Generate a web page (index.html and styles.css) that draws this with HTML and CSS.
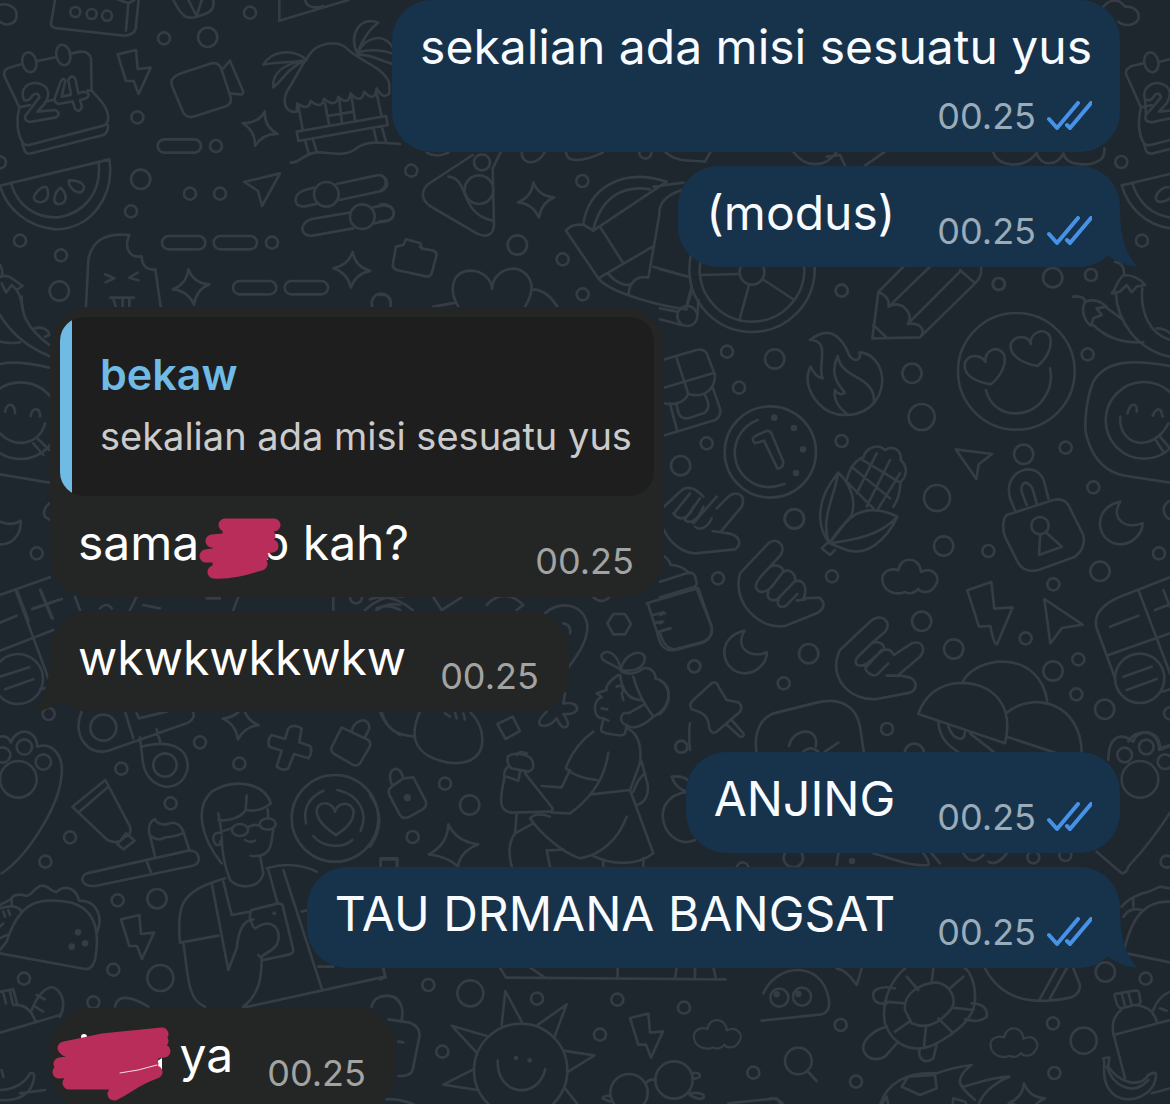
FILE: index.html
```html
<!DOCTYPE html>
<html lang="id">
<head>
	<meta charset="UTF-8">
	<meta name="viewport" content="width=device-width, initial-scale=1.0">
	<title>Chat</title>
	<link rel="stylesheet" href="styles.css">
</head>
<body>
	<svg class="wallpaper" viewBox="0 0 1170 1104" preserveAspectRatio="xMinYMin slice" aria-hidden="true">
		<defs>
			<circle id="dot" r="18"/>
			<circle id="ring" r="29"/>
			<circle id="bigring" r="39"/>
			<path id="star" d="M-8-52Q8-10 55-7Q15 10 9 54Q-10 12-54 8Q-12-10-8-52Z"/>
			<path id="bolt" d="M-47-52L8-65L13-8L52-12L16 67L1 28L-22 28Z"/>
			<path id="moon" d="M-4-65C-95-45-75 60-5 63C35 62 62 30 63 0C10 20-35-15-4-65Z"/>
			<path id="cloud" d="M-30-27C-25-70 35-70 38-22C75-40 100-5 80 20C65 45 35 40 30 28C20 42 0 45-10 38C-40 50-80 35-78-5C-75-25-50-35-30-27Z"/>
			<path id="pill" d="M-45-20H45A20 20 0 0 1 45 20H-45A20 20 0 0 1-45-20Z"/>
		</defs>

		<!-- top left: calendar, melon, beach hut, ice cream -->
		<g transform="scale(.33333)">
			<path d="M-10 20C10 5 50 15 50 45C50 75 15 80 0 65M165 0L153 70Q153 82 165 84L370 107Q410 105 408 75L416 0M385 10L378 92M350-3L385 10L403 0"/>
			<circle cx="226" cy="36" r="15"/><circle cx="275" cy="42" r="15"/><circle cx="321" cy="47" r="15"/>
			<path d="M520 0C545 50 560 60 590 50C630 40 645 30 640 0M565 0L590 48L605 0M838 0V62L1045 0M915 0C920 25 950 25 970 18"/>
			<use href="#dot" x="750" y="38"/><use href="#dot" x="492" y="115"/><use href="#ring" x="623" y="112"/>
			<!-- calendar -->
			<path d="M66 192L25 204Q8 212 14 230L58 322L90 315M262 272H275L273 175Q265 152 240 155L208 162M112 183L170 171M135 306L165 298M58 322C50 350 48 400 70 430Q75 438 90 434L310 377Q328 370 324 345C318 315 300 300 275 272M66 430L75 455Q82 464 95 460L310 405Q325 398 324 375"/>
			<ellipse cx="88" cy="187" rx="21" ry="30" transform="rotate(-12 88 187)"/><ellipse cx="190" cy="165" rx="21" ry="31" transform="rotate(-12 190 165)"/>
			<path d="M72 300C58 265 85 245 115 250C150 260 150 285 135 310L112 335L165 330Q185 340 168 352L90 366Q68 360 78 345L118 292C115 275 100 280 94 292Q85 305 72 300ZM182 245Q190 230 196 242L185 290L213 284L205 240Q215 220 226 236L235 280Q255 270 265 282Q270 295 240 300L246 320Q240 340 226 328L218 304L175 312Q160 305 165 292Z"/>
			<use href="#bolt" x="400" y="215"/><use href="#dot" x="412" y="352"/>
			<path d="M535 223L635 190Q655 186 663 204L692 292Q696 310 680 318L580 350Q560 355 550 338L515 255Q510 235 535 223ZM667 208L690 182L730 275Q728 285 718 283L691 280"/>
			<use href="#star" transform="translate(780 385) rotate(25)"/>
			<use href="#pill" x="538" y="438"/><use href="#dot" x="648" y="438"/>
			<!-- beach hut -->
			<path d="M890 335C850 340 850 300 860 275C885 240 910 180 940 150C970 125 1020 125 1040 145C1080 185 1150 200 1168 250V280Q1150 300 1130 265Q1125 310 1092 275Q1085 315 1052 280Q1045 320 1015 290Q1008 325 972 296Q965 330 932 303Q925 335 892 310ZM895 318L908 388M975 310L988 378M1018 300L1026 370M1055 290L1065 362M1130 280L1145 350M983 348L1060 335M890 395L1158 348L1163 375L895 423ZM915 420L926 460M938 415L950 455M1120 383L1130 425M1145 380L1158 425M872 488C900 490 915 455 960 457C1000 460 1040 470 1070 445C1100 420 1150 428 1200 432"/>
			<path d="M920 180C880 145 815 150 790 194C820 185 870 190 918 180C860 190 815 215 820 262C850 240 860 205 918 180M1072 158C1045 115 1075 45 1135 68C1110 85 1090 115 1072 158C1100 110 1150 95 1180 145M1072 158C1110 145 1160 150 1200 170M1072 165C1120 160 1160 195 1200 195"/>
			<!-- melon slice -->
			<path d="M-20 562L328 478C345 590 270 690 165 688C80 680 20 625 0 558M34 553C55 620 110 655 175 652C250 640 305 580 296 490M140 562C125 555 90 590 106 602C125 615 155 600 140 562ZM182 563C165 575 155 605 172 612C200 615 205 585 182 563ZM206 541C205 560 225 580 243 577C265 560 245 540 206 541Z"/>
			<use href="#dot" x="0" y="487"/><use href="#ring" x="422" y="538"/><use href="#dot" x="393" y="634"/><use href="#dot" x="570" y="581"/><use href="#dot" x="660" y="581"/>
			<path d="M733 546L840 520L786 618L774 573ZM942 563L915 570C880 580 875 620 912 620L955 610M1010 552L1130 526C1160 522 1175 560 1145 573L1018 600M1048 638L935 657C895 670 900 710 938 707L1060 685M1118 622L1150 616C1185 615 1195 655 1160 662L1123 670"/>
			<circle cx="979" cy="583" r="37"/><circle cx="1087" cy="650" r="37"/>
			<use href="#dot" x="60" y="722"/><use href="#dot" x="183" y="766"/><use href="#ring" x="178" y="873"/>
			<use href="#pill" x="551" y="728"/><use href="#pill" x="706" y="728"/><use href="#dot" x="816" y="728"/>
			<path d="M258 920L265 780C275 725 310 698 388 705C370 745 390 775 425 769C425 800 445 812 466 808L482 920M315 823L343 835L317 847M413 818L388 833L415 841M331 893H402M340 895L347 920M368 896V920M388 896V920"/>
			<use href="#star" x="573" y="860"/><use href="#star" transform="translate(1055 808) rotate(12)"/>
			<use href="#pill" x="764" y="863"/><use href="#pill" x="919" y="863"/><use href="#ring" x="1144" y="910"/>
			<path d="M0 830C30 820 45 845 68 858L50 870C60 885 65 900 68 930M5 850L18 878L35 855L50 870M0 795Q10 810 5 830"/>
		</g>

		<!-- top middle: pizza, heart, umbrella -->
		<g transform="translate(380) scale(.33333)">
			<path d="M278 465L145 552C120 575 125 600 150 618L290 700C320 715 340 705 342 675L338 505L375 430M205 530C270 535 235 640 338 662M140 458Q170 475 205 458"/>
			<circle cx="306" cy="487" r="24"/><circle cx="297" cy="569" r="43"/>
			<use href="#dot" x="94" y="512"/><use href="#dot" x="607" y="543"/><use href="#star" x="468" y="599"/><use href="#ring" x="412" y="735"/><use href="#dot" x="548" y="778"/><use href="#dot" x="608" y="883"/><use href="#dot" x="796" y="458"/>
			<path d="M425 455C425 500 475 495 495 455M558 458C560 485 600 490 668 458M855 455C890 490 940 480 975 485L992 455M0 525C20 530 25 560 0 573M0 613C55 605 55 675 0 663"/>
			<path d="M48 740L70 735L78 718L122 730L124 745L160 752Q172 757 169 768L155 820Q150 832 138 829L50 810Q36 804 39 790L48 740ZM120 740L128 748"/>
			<path d="M235 920C205 870 215 815 270 812C310 812 335 840 336 866C340 820 380 800 415 808C455 825 470 865 435 920M160 920L228 908M458 868C495 870 515 895 532 920M0 885C20 880 35 895 32 920"/>
			<path d="M610 672C625 570 720 500 860 545L640 692L612 675Q575 670 558 692L655 835L818 740M655 835C690 880 850 920 920 928M640 688C665 590 730 555 810 568M820 560L910 548M905 570C860 585 835 610 838 645L805 833C770 825 745 850 746 885M663 685L730 790M685 822C710 850 740 860 755 852M820 800L925 830M937 870L920 920"/>
		</g>

		<!-- top right: repeats of calendar and melon -->
		<g transform="translate(770) scale(.33333)">
			<path d="M1000 20Q1020-5 1050 5L1065 20C1110 15 1125 70 1075 75Q1055 75 1045 65M1120 190L1085 198Q1065 208 1068 222L1113 322L1145 315M1167 186L1200 177M1113 322C1105 350 1102 400 1122 430Q1130 438 1145 434L1200 420M1122 430L1128 452Q1135 463 1150 460L1200 447"/>
			<ellipse cx="1144" cy="187" rx="21" ry="30" transform="rotate(-12 1144 187)"/>
			<path d="M1125 298C1115 265 1145 245 1170 250C1205 260 1205 285 1190 310L1167 335L1220 330M1128 345L1173 292C1170 275 1155 280 1150 292Q1140 305 1125 298ZM1128 345Q1120 365 1145 367L1200 355"/>
			<path d="M1200 522L1055 556C1075 625 1130 675 1200 685M1088 553C1110 615 1150 645 1200 652M1195 562C1175 560 1145 590 1163 604Q1180 610 1200 595"/>
			<use href="#dot" x="1054" y="486"/><use href="#dot" x="1116" y="722"/><use href="#dot" x="215" y="872"/><use href="#dot" x="687" y="852"/><use href="#ring" x="848" y="833"/><use href="#dot" x="963" y="825"/>
			<path d="M70 455C110 510 170 500 200 455M345 455L285 497M170 470L210 465L225 497M670 455C675 495 760 515 800 458C810 500 860 500 880 460C890 500 960 500 990 480Q1005 470 1003 445"/>
		</g>

		<!-- right: wheel, pencil, smileys, flame, coin, corn -->
		<g transform="translate(660 260) scale(.33333)">
			<circle cx="276" cy="28" r="188"/><circle cx="276" cy="28" r="157"/><circle cx="276" cy="37" r="37"/>
			<path d="M238 42L120 45M312 60L403 120M267 75L238 182M0 28L85 50M95 80L80 135M0 145L52 155M0 178L65 195M115 120L113 160"/>
			<circle cx="82" cy="168" r="30"/><use href="#dot" x="545" y="92"/><use href="#dot" x="1016" y="72"/>
			<path d="M735 15L655 96L637 235L780 232L945 70C970 45 963 30 963 0M655 96Q690 110 686 140L815 15M686 140C725 115 765 165 743 192L900 35M743 192C780 185 800 210 780 232M640 195L682 235M900 30L945 70"/>
			<path d="M450 240C500 200 540 215 570 290C590 310 605 295 598 277C660 280 690 365 645 425C605 475 520 480 475 430C440 390 435 350 452 320Q465 350 488 355C470 320 515 240 450 240ZM562 462C530 440 520 410 525 390Q540 410 555 398C520 360 515 330 533 288C545 360 645 345 642 425"/>
			<use href="#dot" x="201" y="275"/><use href="#ring" x="344" y="297"/><use href="#dot" x="237" y="383"/><use href="#ring" x="756" y="340"/><use href="#bigring" x="785" y="471"/><use href="#dot" x="545" y="543"/><use href="#dot" x="140" y="550"/><use href="#ring" x="62" y="617"/><use href="#bigring" x="831" y="714"/><use href="#ring" x="1091" y="583"/><use href="#dot" x="1217" y="563"/><use href="#dot" x="1300" y="682"/><use href="#dot" x="1283" y="283"/><use href="#ring" x="403" y="776"/>
			<circle cx="1069" cy="334" r="175"/>
			<path d="M993 373C945 365 905 345 916 305C930 280 965 285 976 306C975 270 1010 255 1030 280C1045 310 1020 350 993 373ZM1133 318C1085 310 1045 285 1053 250C1065 225 1105 225 1112 252C1110 215 1155 200 1170 230C1180 265 1155 300 1133 318ZM978 390C1000 480 1115 480 1155 410Q1180 370 1170 325"/>
			<path d="M0 302L110 270Q130 265 140 280L165 345C165 390 130 415 85 402C70 435 30 435 12 430M12 383L158 340M50 295L85 402M50 435C55 470 65 480 90 473L130 460C150 450 148 430 135 405M157 380L180 445Q185 470 165 480L0 530M30 430L52 515"/>
			<circle cx="331" cy="576" r="137"/><path d="M293 480C215 510 200 610 265 660Q310 695 373 672M285 550C270 535 280 528 320 513Q330 510 335 522L370 605Q370 625 352 625L312 542Z"/>
			<g class="wallpaper-solid"><circle cx="343" cy="473" r="10"/><circle cx="402" cy="504" r="10"/><circle cx="429" cy="568" r="10"/><circle cx="408" cy="639" r="10"/></g>
			<path d="M887 568L996 582L956 613L949 657ZM1240 110Q1270 105 1276 125C1260 150 1275 185 1293 197L1300 175L1325 165L1310 145L1340 140C1310 115 1290 120 1276 125M1300 195C1340 235 1390 250 1450 247M1335 140L1390 180M1365 5Q1395 10 1392 45C1370 60 1370 85 1355 100L1380 95L1400 75L1415 97L1430 80L1455 75C1435 50 1410 45 1392 45M1368 100C1370 180 1430 270 1530 290M1447 85C1440 160 1470 220 1530 240M1490 205Q1515 205 1530 220"/>
			<path d="M1530 318C1430 300 1340 295 1300 365C1280 410 1270 500 1280 530C1300 600 1340 640 1400 648L1530 668"/>
			<circle cx="1452" cy="481" r="115"/><path d="M1402 460Q1410 430 1425 435Q1432 440 1430 455M1478 467Q1490 440 1503 452L1508 470M1381 470C1375 560 1480 580 1525 490M1487 540L1510 575M1500 530L1530 565"/>
			<!-- corn -->
			<path d="M508 850C470 800 465 720 535 638C570 670 590 720 575 765L508 850C480 780 520 720 535 638M560 660C570 620 590 600 610 592C620 560 655 550 675 570C700 555 725 570 722 600C745 620 740 650 722 665C720 700 715 720 700 740M575 620L690 715M600 595L715 665M560 665L640 745M590 700L650 580M620 740L690 600M655 745L720 640M508 850C560 770 610 720 712 770C680 840 620 890 560 870L508 850C570 840 660 830 712 770M500 850L485 865L510 885L525 870"/>
		</g>

		<!-- right: hands, lock, clouds -->
		<g transform="translate(660 500) scale(.33333)">
			<path d="M12 90C30 130 70 160 105 160L225 148C250 130 235 105 205 100L158 93M185 92L245 20C260-20 225-30 200-5L170 25M12 20L60-25C85-50 110-30 130-10M40 40C60 70 90 50 100 20M75 60C90 75 115 60 130 20M105 80C120 95 145 80 155 55M42 40L90-20M75 58L120-5M100 70L170-10"/>
			<path d="M240 220L325 130C350 110 380 135 362 165L325 205C340 190 365 195 372 215C385 205 410 220 405 245C430 235 445 265 430 295L478 293C500 310 490 330 470 340L375 378C300 390 215 310 240 220ZM325 205C290 240 275 265 300 275C330 280 340 250 370 215M325 275C315 300 345 310 360 290L408 240M360 290C340 320 370 330 385 310L412 282M410 302L435 298"/>
			<path d="M540 450L630 365C660 335 700 365 675 395L635 430C660 420 675 435 672 450C690 445 695 455 702 465L755 430C785 420 800 445 780 470L715 525L750 533C775 545 770 570 750 578L650 597C570 605 500 530 540 450ZM635 430C600 465 575 480 592 495C615 505 630 480 670 450M618 495C610 515 640 535 655 520L685 490M620 500L665 450M680 527H720"/>
			<path d="M1040 45L1180 0C1200-5 1215 0 1225 15L1270 105Q1278 145 1245 170L1135 210Q1095 220 1075 190L1035 110C1025 80 1030 55 1040 45M1065 30L1052 0C1020-90 1140-130 1155-45L1165-5M1100 15L1085-25C1080-65 1115-55 1120-25L1130 10"/>
			<circle cx="1140" cy="77" r="26"/><path d="M1141 103L1137 165L1206 140L1157 97"/>
			<use href="#moon" x="1385" y="70"/><use href="#moon" x="258" y="457"/><use href="#cloud" x="745" y="238"/>
			<use href="#ring" x="403" y="57"/><use href="#ring" x="851" y="138"/><use href="#dot" x="985" y="153"/><use href="#dot" x="1497" y="160"/><use href="#ring" x="1320" y="214"/><use href="#dot" x="174" y="235"/><use href="#dot" x="516" y="229"/><use href="#dot" x="1180" y="253"/><use href="#ring" x="785" y="364"/><use href="#dot" x="1097" y="415"/><use href="#ring" x="446" y="461"/><use href="#ring" x="881" y="447"/><use href="#dot" x="103" y="499"/><use href="#dot" x="371" y="550"/><use href="#ring" x="1179" y="513"/><use href="#dot" x="1255" y="478"/><use href="#dot" x="1249" y="583"/><use href="#ring" x="1334" y="628"/><use href="#dot" x="681" y="687"/><use href="#dot" x="64" y="741"/><use href="#ring" x="763" y="760"/><use href="#ring" x="1540" y="30"/><use href="#dot" x="1530" y="640"/>
			<path d="M922 271L994 246L1003 326L1058 322L1011 433Q1002 435 991 378L957 380ZM1153 297L1268 374L1206 384L1171 430Z"/>
			<path d="M1530 232L1380 290C1320 315 1300 350 1310 385L1365 535M1435 270L1530 520M1345 465L1530 400M1350 380L1435 347M1510 270L1530 320M1485 330L1530 313M1390 530L1475 500M1400 570L1490 537M1505 575L1530 568"/><circle cx="1439" cy="535" r="74"/>
			<path d="M0 165Q25 170 32 195Q65 195 88 220M0 245L85 218Q105 215 108 240Q115 255 100 262L0 292M108 262L155 380Q160 410 130 425L45 448Q15 448 0 400M0 345L15 340M0 370L10 365M0 395L32 385"/>
			<path d="M155 550Q170 540 178 565L200 600L235 607Q250 620 240 635L170 695Q155 705 148 685C145 650 135 640 95 628Q85 615 100 600ZM198 672L240 710Q255 712 250 700L215 660M0 540C35 560 35 610 0 642"/>
			<path d="M290 760C280 700 300 650 350 638L470 608C540 590 590 620 600 680L612 760M387 738C400 680 480 680 467 740M430 755Q450 735 475 755M495 755L535 728"/>
			<path d="M775 642C815 520 970 530 1018 600Q1055 650 1035 730ZM905 550C950 460 1140 450 1162 605M1038 640C1120 570 1265 610 1265 760M835 668C840 720 870 740 900 760M865 680C880 720 915 730 915 695M930 700L1000 755M1040 710L1190 760"/>
			<path d="M1345 780C1345 710 1380 695 1420 725C1430 685 1500 685 1500 745L1530 735"/><circle cx="1394" cy="765" r="22"/><circle cx="1459" cy="741" r="22"/><circle cx="1515" cy="785" r="22"/>
		</g>

		<!-- left edge -->
		<g transform="translate(0 290) scale(.33333)">
			<path d="M0 75C40 140 90 175 148 198M65 20C65 70 75 110 148 165M0 155Q30 162 60 157M105 115C120 110 145 115 148 135L135 140M0 222Q50 210 148 233M0 553L148 578M15 365Q20 340 35 345Q45 350 45 370M92 378Q95 355 112 358Q122 365 120 380M0 430C50 480 120 460 135 400M100 460L130 495M115 448L148 480M0 695Q35 710 62 692C65 735 35 765 0 763M148 640Q125 660 135 680L150 690M0 915L150 862M50 900L85 990M120 900L155 985M100 955L185 927"/>
			<circle cx="62" cy="392" r="115"/><use href="#dot" x="110" y="790"/>
			<path d="M225 920L240 960M300 955Q320 935 335 955M390 960L410 920M620 925L660 925M700 960L715 920M430 945L480 955M1000 960V920M1095 960Q1150 910 1210 920M1125 965Q1160 935 1200 945"/><use href="#dot" x="1068" y="922"/>
		</g>

		<!-- lower left: paw, stethoscope, toothpaste, student -->
		<g transform="translate(0 590) scale(.33333)">
			<path d="M0 182L160 120M47 0L145 265M97 58L185 27M122 0L158 85M0 98L50 77M0 260L88 232M15 298L100 268M120 298L145 292"/><circle cx="54" cy="267" r="75"/><use href="#dot" x="146" y="372"/>
			<path d="M0 440Q25 435 32 458C50 410 110 415 112 470C160 455 190 500 185 550C180 650 80 800 5 850"/><circle cx="55" cy="568" r="55"/><circle cx="8" cy="495" r="23"/><circle cx="73" cy="471" r="23"/><circle cx="130" cy="516" r="23"/>
			<path d="M245 365C215 430 260 500 325 482L560 400Q590 385 578 365M375 365L400 445M410 370L416 385L500 365M420 442L428 510C435 600 540 620 562 540C570 480 520 445 425 470M470 418L482 460"/><circle cx="310" cy="413" r="39"/><circle cx="495" cy="525" r="35"/>
			<use href="#dot" x="364" y="536"/><use href="#dot" x="600" y="457"/><use href="#dot" x="718" y="521"/><use href="#dot" x="512" y="640"/><use href="#dot" x="210" y="742"/><use href="#dot" x="136" y="815"/>
			<use href="#star" transform="translate(722 395) rotate(18)"/>
			<path d="M865 415Q880 400 905 415L898 457L930 468Q940 485 925 505L882 492L865 535Q850 545 830 530L845 482L808 470Q800 450 815 435L855 447ZM1025 412L1105 450Q1115 460 1108 472L1080 520Q1070 530 1058 524L1000 490Q990 482 996 470ZM1055 422C1065 385 1110 380 1108 415L1095 442"/>
			<path d="M217 650L316 570L390 710C395 730 385 740 375 740C355 765 335 755 322 750ZM238 665L325 590M352 763L378 730L404 752L370 778Z"/>
			<path d="M260 850L565 782C605 780 605 825 575 828L285 888C240 890 240 860 260 850ZM440 813L452 845M465 800L452 745C440 710 450 695 465 687Q470 705 500 703C530 690 545 710 550 725L568 780M455 740Q475 755 495 742Q530 740 552 728"/>
			<path d="M665 820C600 740 585 650 635 605C700 565 790 575 813 640C790 660 765 665 737 660C725 680 690 695 655 690M740 617L737 660M655 670L665 730C635 720 635 755 650 765Q670 765 660 755M665 740C665 790 675 830 690 870C720 900 780 895 790 850L780 797Q750 800 752 797M780 797C815 790 815 755 820 715M803 658L805 685M672 722L695 715M735 750Q750 760 765 752"/>
			<ellipse cx="720" cy="720" rx="24" ry="18"/><ellipse cx="803" cy="702" rx="24" ry="17"/><path d="M744 712Q762 700 780 708"/>
			<circle cx="1005" cy="685" r="130"/><path d="M970 602C920 625 910 660 918 700M1012 600C1080 615 1105 670 1082 722M940 738C970 775 1030 775 1057 750M1008 735C960 705 940 670 955 648C975 630 1000 645 1005 665C1015 635 1050 635 1060 660C1065 690 1040 715 1008 735Z"/>
			<path d="M1145 365Q1155 410 1200 435M1142 830V808H1190V830"/>
		</g>

		<!-- lower middle: sweets, kneeling girl -->
		<g transform="translate(370 590) scale(.33333)">
			<path d="M0 28Q60 5 128 60M20 55Q55 40 90 60M190 22L215 60L275 22M350 45Q400-10 460 45L440 60M525 70C570 30 640 40 652 105C655 160 610 210 590 240M580 100Q605 105 600 130M670 22Q695 45 720 20M712 100L730 72H765L783 102L765 133H730Z"/>
			<path d="M830 40L985-5L1025 110C1030 140 1010 155 990 160L915 180C885 185 870 165 865 140L835 45M850 75L880 67M858 98L875 95M865 125L900 115"/>
			<path d="M30 365C50 420 80 435 135 440M150 365C120 430 130 480 190 505C250 530 320 525 335 470Q345 410 300 365M225 370L240 380M255 368L260 385M280 370L285 388M382 402L428 380L450 423L407 447ZM585 310L580 340Q620 335 622 358Q615 375 580 372Q600 400 590 410Q575 420 560 385Q535 415 510 405Q500 395 530 365"/>
			<use href="#dot" x="973" y="229"/><use href="#dot" x="934" y="470"/><use href="#dot" x="225" y="581"/><use href="#dot" x="128" y="741"/><use href="#ring" x="299" y="645"/><use href="#dot" x="1118" y="835"/>
			<path d="M100 565L130 562L168 635Q170 650 158 658L115 682Q98 688 90 675L58 615Q52 600 65 590ZM65 582C45 535 90 520 98 560"/><g class="wallpaper-solid"><circle cx="112" cy="623" r="11"/></g><path d="M235 703Q260 755 325 763Q270 785 264 830Q235 800 176 793Q232 765 235 703Z"/>
			<path d="M0 615Q55 690 0 770M32 830V805H82V830M752 240C720 215 690 215 695 195C710 175 745 190 752 240C765 185 820 175 825 205C820 240 785 245 752 240M745 255C720 270 705 290 710 300L680 310L695 322C665 330 670 390 700 385L715 392M695 355L712 358M700 387C695 420 680 425 720 432Q760 440 765 430L770 405M770 405C745 400 750 360 775 370L820 345M740 290C755 280 765 300 755 310L760 330M750 255Q760 330 815 330M790 260C800 300 820 340 850 380M755 245Q790 260 820 235C850 230 860 260 855 265C910 280 910 350 850 380C830 400 790 425 770 405"/>
			<path d="M670 425C620 460 600 500 587 535Q620 565 680 570M600 540L575 592L515 588M715 488C705 560 670 620 600 670L545 668M770 415C810 430 815 480 810 520L780 600L665 613M815 515L832 580C840 620 820 640 800 645M780 600L850 790C800 830 720 825 665 795M790 605C800 575 810 560 825 550M770 680C745 750 690 795 630 805C580 790 510 730 480 685Q500 665 540 680M403 565Q390 620 395 645Q400 665 425 668L540 665Q555 660 540 645L465 550M403 565Q400 540 415 530M413 500C430 485 480 490 488 515Q495 540 475 545L425 535Q410 525 413 500M440 495Q450 480 470 490M410 560L445 572L450 545M440 670L435 730L490 700M435 730C415 760 415 790 425 830M530 780L540 830M530 782L580 778M700 815V830M820 805V830"/>
			<path d="M970 605C905 605 880 640 878 675C880 735 930 770 975 750M955 605Q920 600 905 560Q950 555 965 585M960 400C955 430 958 460 960 480"/>
		</g>

		<!-- bottom left: taco, hoodie, fruit box -->
		<g transform="translate(0 860) scale(.33333)">
			<path d="M-10 278L255 327Q275 330 285 300C300 220 290 150 215 128C120 110 60 120 20 245L0 270M0 135L32 118C45 95 70 105 80 108C105 100 90 95 120 78C145 70 155 100 170 95C200 70 230 90 237 122C290 120 310 170 292 215M35 135V118M0 145Q50 130 65 155M10 155L15 170M25 150L30 165M0 200L10 190M0 235L20 225"/>
			<g class="wallpaper-solid"><circle cx="234" cy="217" r="10"/><circle cx="215" cy="260" r="10"/><circle cx="255" cy="250" r="10"/><circle cx="823" cy="160" r="6"/></g>
			<use href="#dot" x="353" y="121"/><use href="#ring" x="471" y="116"/><use href="#bolt" x="410" y="230"/><use href="#dot" x="340" y="329"/><use href="#bigring" x="481" y="354"/><use href="#dot" x="72" y="356"/><use href="#dot" x="280" y="427"/>
			<path d="M675 55L635 68C545 100 530 140 540 248L655 227M550 250C565 340 560 420 615 440M635 70L685 330L710 265C715 210 730 180 760 178M670 65L695 165L750 155M800 25C850 10 900 10 950 35M805 30L833 130M850 30L965 385M755 150L835 130Q850 130 850 145L880 270Q880 280 870 283L790 300L775 285M760 200C750 180 745 165 755 150M765 205C820 170 840 210 835 240C830 270 800 275 785 290C785 350 780 400 730 440M730 443L1155 350L1150 325M905 155L925 150M955 320L1000 320"/>
			<path d="M345 440C350 410 380 400 445 440M0 395L40 388L52 435M10 400L18 430M30 395L38 430M40 435Q85 430 105 480M95 450C115 400 140 380 160 382C195 400 195 440 180 470M110 405L135 418M105 440L130 455M0 518L180 465M5 630L10 650M0 690C50 690 80 660 90 640Q105 635 102 655C95 700 60 725 0 720M60 700L135 690"/>
			<path d="M1115 440C1120 400 1190 395 1200 430"/>
		</g>

		<!-- bottom: sun, glasses, cloud -->
		<g transform="translate(380 930) scale(.33333)">
			<path d="M0 148L17 142L10 115M0 200C50 190 75 220 65 270M25 268L90 278Q122 290 118 320L98 420Q90 440 55 438M55 335L70 337M20 508Q50 505 100 522M358 110L378 143L1037 148M450 112L490 140M713 112V143M890 112L885 145M945 112V145M1000 112L1008 145"/>
			<use href="#dot" x="145" y="165"/><use href="#bigring" x="271" y="190"/><use href="#dot" x="471" y="206"/><use href="#dot" x="712" y="209"/><use href="#dot" x="912" y="233"/><use href="#dot" x="660" y="314"/><use href="#dot" x="187" y="365"/><use href="#dot" x="1120" y="428"/>
			<circle cx="422" cy="421" r="140"/>
			<path d="M365 285L376 183L425 275M470 287L560 223L523 322M550 362L643 376L565 425M555 475L595 525M320 318L215 287L292 370M280 418L190 464L292 480M353 392C350 500 475 510 496 417"/>
			<g class="wallpaper-solid"><circle cx="408" cy="384" r="7"/><circle cx="449" cy="391" r="7"/></g>
			<use href="#bolt" x="797" y="316"/><use href="#cloud" transform="translate(1008 320) scale(.85)"/>
			<circle cx="747" cy="488" r="56"/><circle cx="882" cy="450" r="56"/><path d="M797 462Q805 445 828 450M935 430Q960 425 960 438Q955 448 937 445M925 490Q970 485 972 500Q965 515 930 495M693 498Q670 495 668 505L690 515M1045 520L1190 505L1200 520"/>
		</g>

		<!-- bottom right: ghost, turtle, football, bottle -->
		<g transform="translate(770 730) scale(.33333)">
			<path d="M980 365L1055 430Q1070 430 1075 410C1130 350 1180 280 1205 240M1075 35Q1090 5 1130 7Q1165 15 1168 60L1200 48"/><circle cx="1110" cy="148" r="55"/>
			<use href="#ring" x="70" y="383"/><use href="#dot" x="790" y="382"/><use href="#dot" x="886" y="375"/><use href="#dot" x="1190" y="395"/><use href="#ring" x="1006" y="726"/><use href="#dot" x="1127" y="746"/><use href="#dot" x="212" y="885"/><use href="#dot" x="849" y="880"/><use href="#bigring" x="941" y="932"/><use href="#dot" x="853" y="1029"/><use href="#dot" x="258" y="1055"/>
			<g class="wallpaper-solid"><circle cx="246" cy="393" r="10"/><circle cx="20" cy="793" r="10"/><circle cx="85" cy="792" r="10"/></g>
			<path d="M200 405L205 370M310 370C380 390 420 410 475 405Q480 395 460 370M485 370L510 400M580 370Q605 410 640 375M655 395Q680 410 710 370M1055 530C1080 500 1100 500 1115 490C1130 490 1150 480 1170 470L1200 475M1090 530V505M1200 515C1120 510 1085 570 1065 650M1060 560Q1080 530 1115 540M1070 670L1200 697"/>
			<path d="M-20 790C20 700 150 690 175 800Q185 845 155 853L-25 872"/><circle cx="28" cy="803" r="27"/><circle cx="96" cy="800" r="27"/>
			<path d="M200 715Q230 720 260 765L275 715M410 710C350 760 335 830 345 880C370 950 430 970 490 945C560 910 620 860 615 800C615 750 595 720 580 710M405 840C400 790 450 760 500 757C545 765 560 810 545 835C510 880 470 900 425 880ZM490 715L485 757M410 740L445 780M345 815L405 820M375 905L418 875M462 950L468 890M545 905L505 865M610 840L547 833M580 740L540 775M375 775C330 765 305 780 310 800Q315 825 350 820M605 820C640 820 655 840 650 860Q630 880 585 868M350 890C310 900 270 935 282 965Q300 1000 345 980L385 935M450 955C440 985 465 1005 490 985L500 945"/>
			<path d="M645 715C690 800 770 830 900 803Q930 795 930 765L910 715M860 715L808 810M890 715L840 805"/>
			<circle cx="85" cy="993" r="40"/><path d="M112 1023L140 1053M0 1105Q30 1105 40 1125"/>
			<use href="#cloud" transform="translate(728 945) scale(.85)"/>
			<path d="M330 1125C350 1060 410 1025 500 1030Q555 1010 605 1005C570 1030 560 1060 580 1070C620 1060 670 1040 718 1040C670 1060 640 1085 625 1125M395 1070L415 1040L495 1035L500 1075L450 1095ZM335 1125L350 1100L355 1125M548 1125L550 1105L585 1115L590 1125M575 1070Q590 1090 615 1110"/><use href="#star" x="770" y="1112"/>
			<path d="M1035 800Q1030 790 1045 790L1095 782Q1108 780 1108 795L1112 815Q1110 825 1095 825L1055 835Q1040 835 1035 800M1055 790L1065 828M1075 788L1085 825M1055 838C1030 860 1025 880 1030 910L1065 1045M1095 825Q1150 830 1160 875M1030 915L1200 870M1150 840Q1165 800 1200 785M1170 835L1190 842M1000 985L1018 982L1015 1010C1050 1060 1110 1075 1135 1035Q1160 1020 1158 1040C1150 1100 1080 1120 1040 1100C1000 1075 1000 1030 1003 1000ZM1010 1010C1030 1070 1090 1100 1135 1050M1145 1090L1200 1075"/>
		</g>
	</svg>

	<svg class="sprite" aria-hidden="true">
		<symbol id="read" viewBox="0 0 46 30">
			<path d="M3 18L11 27L32 2M21 24L24 27L45 2" fill="none" stroke="currentColor" stroke-width="4" stroke-linecap="round" stroke-linejoin="round"/>
		</symbol>
		<symbol id="tail" viewBox="0 0 48 60">
			<path d="M30 0C30 26 34 46 48 60C36 59 28 55 20 50L0 30Z" fill="currentColor"/>
		</symbol>
	</svg>

	<main class="chat">
		<div class="group group--out">
			<div class="bubble">
				<div class="line line--stacked">
					<p class="text">sekalian ada misi sesuatu yus</p>
					<div class="meta"><time>00.25</time><svg class="read"><use href="#read"/></svg></div>
				</div>
			</div>
			<div class="bubble">
				<div class="line">
					<p class="text">(modus)</p>
					<div class="meta"><time>00.25</time><svg class="read"><use href="#read"/></svg></div>
				</div>
				<svg class="tail"><use href="#tail"/></svg>
			</div>
		</div>

		<div class="group group--in">
			<div class="bubble bubble--reply">
				<blockquote class="quote">
					<cite class="quote-name">bekaw</cite>
					<p class="quote-text">sekalian ada misi sesuatu yus</p>
				</blockquote>
				<div class="line">
					<p class="text">sama<span class="hidden-word hidden-word--short">b<svg class="scribble" viewBox="0 0 90 64">
						<path d="M26 7H75M13 23L70 18M13 23L73 28L7 38H63L15 54C30 55 45 51 62 46M20 30L62 34M20 46L58 42M30 14L68 13" stroke-width="13"/>
					</svg></span> kah?</p>
					<div class="meta"><time>00.25</time></div>
				</div>
			</div>
			<div class="bubble">
				<div class="line">
					<p class="text">wkwkwkkwkw</p>
					<div class="meta"><time>00.25</time></div>
				</div>
				<svg class="tail"><use href="#tail"/></svg>
			</div>
		</div>

		<div class="group group--out">
			<div class="bubble">
				<div class="line">
					<p class="text">ANJING</p>
					<div class="meta"><time>00.25</time><svg class="read"><use href="#read"/></svg></div>
				</div>
			</div>
			<div class="bubble">
				<div class="line">
					<p class="text">TAU DRMANA BANGSAT</p>
					<div class="meta"><time>00.25</time><svg class="read"><use href="#read"/></svg></div>
				</div>
				<svg class="tail"><use href="#tail"/></svg>
			</div>
		</div>

		<div class="group group--in">
			<div class="bubble">
				<div class="line">
					<p class="text"><span class="hidden-word hidden-word--long"><svg class="scribble" viewBox="0 0 120 76">
						<circle class="scribble-peek" cx="32" cy="11" r="3"/>
						<path class="scribble-peek" d="M104 36L110 32V46H104Z"/>
						<path d="M12 22L50 14L110 8M14 24L110 15M20 30L112 25L8 38L100 32M7 46L100 38M17 57L100 44M17 57H60L104 46M62 68C75 62 85 52 104 46" stroke-width="13"/>
						<path class="scribble-gap" d="M68 47Q86 45 105 39"/>
					</svg></span> ya</p>
					<div class="meta"><time>00.25</time></div>
				</div>
			</div>
		</div>
	</main>
</body>
</html>
```
FILE: styles.css
```css
* {
	box-sizing: border-box;
}

body {
	margin: 0;
	background-color: #1e262e;
	font-family: Inter, "Liberation Sans", sans-serif;
}

p,
blockquote {
	margin: 0;
}

.wallpaper {
	position: fixed;
	top: 0;
	left: 0;
	width: 100%;
	height: 100%;
	z-index: -1;
	fill: none;
	stroke: #353c44;
	stroke-width: 8;
	stroke-linecap: round;
	stroke-linejoin: round;
}

.wallpaper-solid {
	fill: #353c44;
	stroke: none;
}

.sprite {
	display: none;
}

.chat {
	height: 100vh;
	overflow: hidden;
	padding: 0 50px;
	display: flex;
	flex-direction: column;
	gap: 40px;
}

.group {
	flex: none;
	display: flex;
	flex-direction: column;
	align-items: flex-start;
	gap: 14px;
}

.group--out {
	align-items: flex-end;
}

.bubble {
	position: relative;
	max-width: 80%;
	padding: 0 30px 14px 28px;
	border-radius: 40px;
	background-color: #242625;
	color: #fff;
}

.group--out .bubble {
	padding-right: 28px;
	background-color: #17334b;
	color: #f8fbff;
}

.line {
	display: flex;
	justify-content: space-between;
	align-items: flex-end;
	gap: 34px;
	padding-top: 17px;
}

.group--out .line {
	gap: 42px;
}

.group--out .line--stacked {
	flex-direction: column;
	gap: 7px;
}

.text {
	margin-bottom: 10px;
	font-size: 48px;
	line-height: 60px;
	white-space: nowrap;
}

.meta {
	display: flex;
	align-items: center;
	gap: 10px;
	font-size: 36px;
	line-height: 44px;
	color: #a2a3a3;
}

.group--out .meta {
	color: #9aabba;
}

.read {
	width: 46px;
	height: 30px;
	color: #4791e6;
}

.tail {
	position: absolute;
	right: -18px;
	bottom: 0;
	width: 48px;
	height: 60px;
	color: #17334b;
}

.group--in .tail {
	right: auto;
	left: -18px;
	color: #242625;
	transform: scaleX(-1);
}

/* reply */
.bubble--reply {
	padding-top: 10px;
}

.quote {
	margin: 0 -20px 0 -18px;
	padding: 27px 22px 28px 40px;
	border-radius: 24px;
	background: linear-gradient(to right, #6fbbe6 12px, #1e1e1e 12px);
}

.quote-name {
	display: block;
	font-size: 43px;
	font-style: normal;
	font-weight: 600;
	line-height: 60px;
	color: #6fbbe6;
}

.quote-text {
	font-size: 38px;
	line-height: 64px;
	color: #cbcbcb;
	white-space: nowrap;
}

/* crossed out words */
.hidden-word {
	position: relative;
	display: inline-block;
	text-align: right;
}

.hidden-word--short {
	width: 90px;
}

.hidden-word--long {
	width: 88px;
	height: 30px;
}

.scribble {
	position: absolute;
	left: 0;
	top: 5px;
	width: 90px;
	height: 64px;
	fill: none;
	stroke: #b92d5b;
	stroke-linecap: round;
	stroke-linejoin: round;
}

.hidden-word--long .scribble {
	left: -26px;
	top: -16px;
	width: 120px;
	height: 76px;
}

.scribble-peek {
	fill: #fff;
	stroke: none;
}

.scribble-gap {
	stroke: #f4dfe6;
	stroke-width: 1;
}
```
